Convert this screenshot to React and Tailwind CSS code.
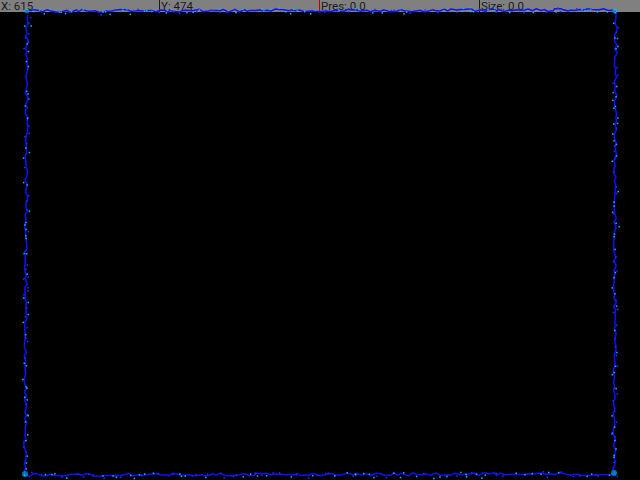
import React from 'react';

// seeded noise so the trace looks the same each render
function rng(seed) {
  let s = seed;
  return () => {
    s = (s * 16807) % 2147483647;
    return (s - 1) / 2147483646;
  };
}

function buildTrace() {
  const r = rng(42);
  const corners = [
    [27, 11],
    [616, 10],
    [614, 474],
    [25, 475],
    [27, 12],
  ];
  const pts = [];
  const dots = [];
  for (let i = 0; i < corners.length - 1; i++) {
    const [x0, y0] = corners[i];
    const [x1, y1] = corners[i + 1];
    const len = Math.hypot(x1 - x0, y1 - y0);
    const steps = Math.round(len / 4);
    for (let k = 0; k < steps; k++) {
      const t = k / steps;
      const jx = (r() - 0.5) * 3;
      const jy = (r() - 0.5) * 3;
      const x = x0 + (x1 - x0) * t + jx;
      const y = y0 + (y1 - y0) * t + jy;
      pts.push(`${x.toFixed(1)},${y.toFixed(1)}`);
      if (r() < 0.7) {
        dots.push({
          x: x + (r() - 0.5) * 5,
          y: y + (r() - 0.5) * 5,
          c: r() < 0.55 ? '#00c0ff' : '#2030ff',
        });
      }
    }
  }
  return { pts: pts.join(' '), dots };
}

const trace = buildTrace();

function Cell({ children, divider }) {
  return (
    <div className={`w-40 h-full pl-px overflow-hidden whitespace-nowrap ${divider}`}>
      {children}
    </div>
  );
}

export default function App() {
  return (
    <div className="relative w-[640px] h-[480px] bg-black overflow-hidden">
      <div
        className="flex h-[12px] bg-[#808080] text-[#1a1a1a] text-[11.5px] leading-[12px]"
        style={{ fontFamily: 'Roboto, "Open Sans", sans-serif' }}
      >
        <Cell divider="border-r border-[#1a1a1a]">X: 615</Cell>
        <Cell divider="border-r border-[#c00000]">Y: 474</Cell>
        <Cell divider="border-r border-[#1a1a1a]">Pres: 0.0</Cell>
        <Cell divider="">Size: 0.0</Cell>
      </div>
      <svg className="absolute inset-0" width="640" height="480" viewBox="0 0 640 480">
        <polyline points={trace.pts} fill="none" stroke="#1010ff" strokeWidth="1.5" />
        {trace.dots.map((d, i) => (
          <rect key={i} x={d.x} y={d.y} width="1.5" height="1.5" fill={d.c} />
        ))}
        <circle cx="25" cy="474" r="3" fill="#00c0ff" opacity="0.6" />
        <circle cx="614" cy="473" r="3" fill="#00c0ff" opacity="0.6" />
        <circle cx="27" cy="11" r="2.5" fill="#00c0ff" opacity="0.5" />
        <circle cx="615" cy="11" r="2.5" fill="#00c0ff" opacity="0.5" />
      </svg>
    </div>
  );
}
